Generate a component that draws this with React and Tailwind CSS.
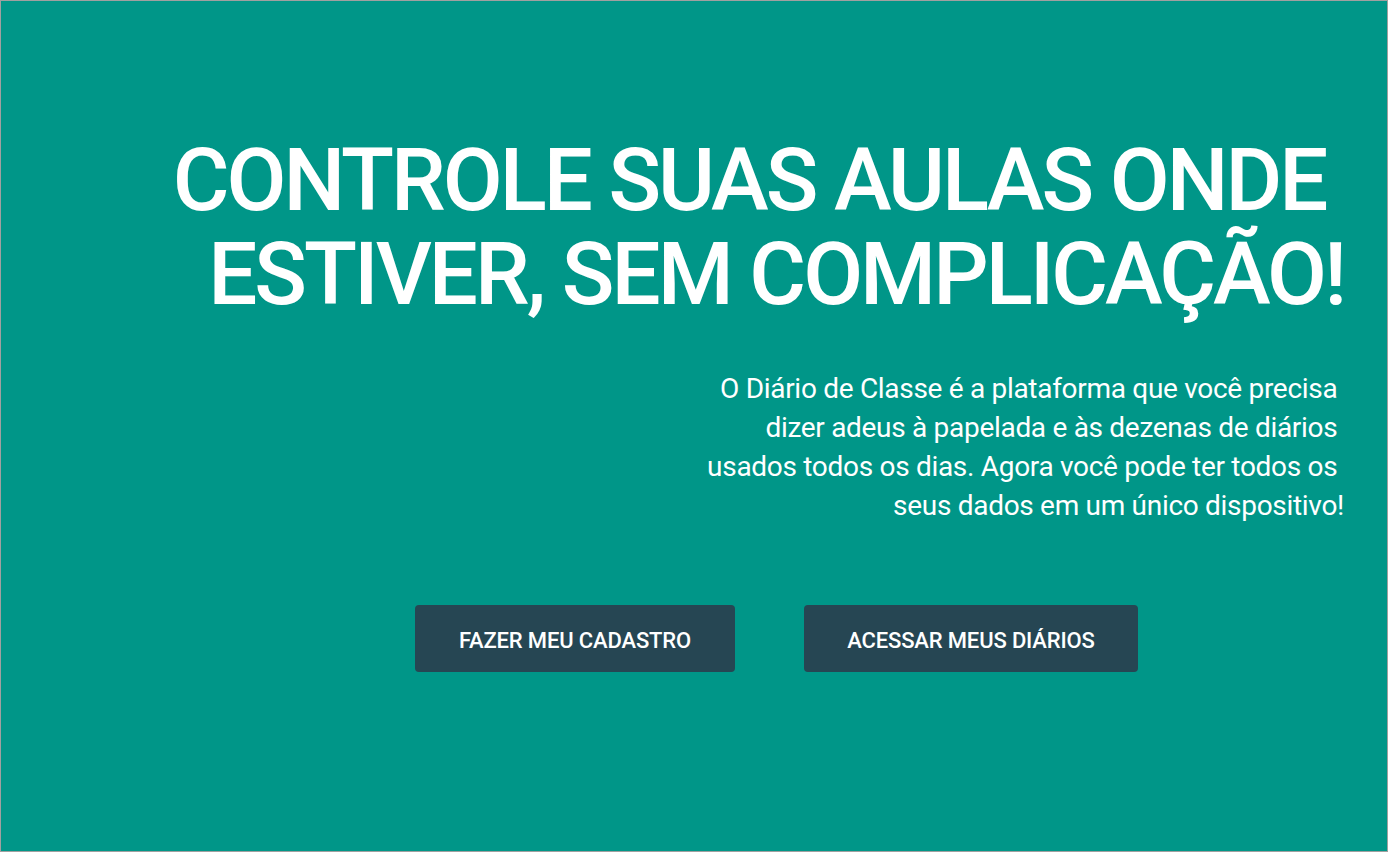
export default function App() {
  return (
    <div
      className="w-[1388px] h-[852px] box-border border border-[#a0a0a0] bg-[#009688] text-white flex flex-col"
      style={{ fontFamily: "Roboto, 'Liberation Sans', sans-serif" }}
    >
      <div className="pt-[132px] pr-[43px] flex flex-col items-end">
        <h1 className="text-[87px] leading-[94px] font-medium tracking-[-3px] text-right whitespace-pre">
          {"CONTROLE SUAS AULAS ONDE \nESTIVER, SEM COMPLICAÇÃO!"}
        </h1>
        <p className="mt-[48px] text-[28px] leading-[39px] tracking-[-0.3px] text-right whitespace-pre">
          {"O Diário de Classe é a plataforma que você precisa \ndizer adeus à papelada e às dezenas de diários \nusados todos os dias. Agora você pode ter todos os \nseus dados em um único dispositivo!"}
        </p>
      </div>
      <div className="mt-[80px] pl-[414px] flex gap-[69px]">
        <button className="w-[320px] h-[67px] pt-[4px] rounded-[4px] bg-[#264653] text-white text-[22px] font-medium tracking-[-0.15px]">
          FAZER MEU CADASTRO
        </button>
        <button className="w-[334px] h-[67px] pt-[4px] rounded-[4px] bg-[#264653] text-white text-[22px] font-medium tracking-[-0.15px]">
          ACESSAR MEUS DIÁRIOS
        </button>
      </div>
    </div>
  );
}
